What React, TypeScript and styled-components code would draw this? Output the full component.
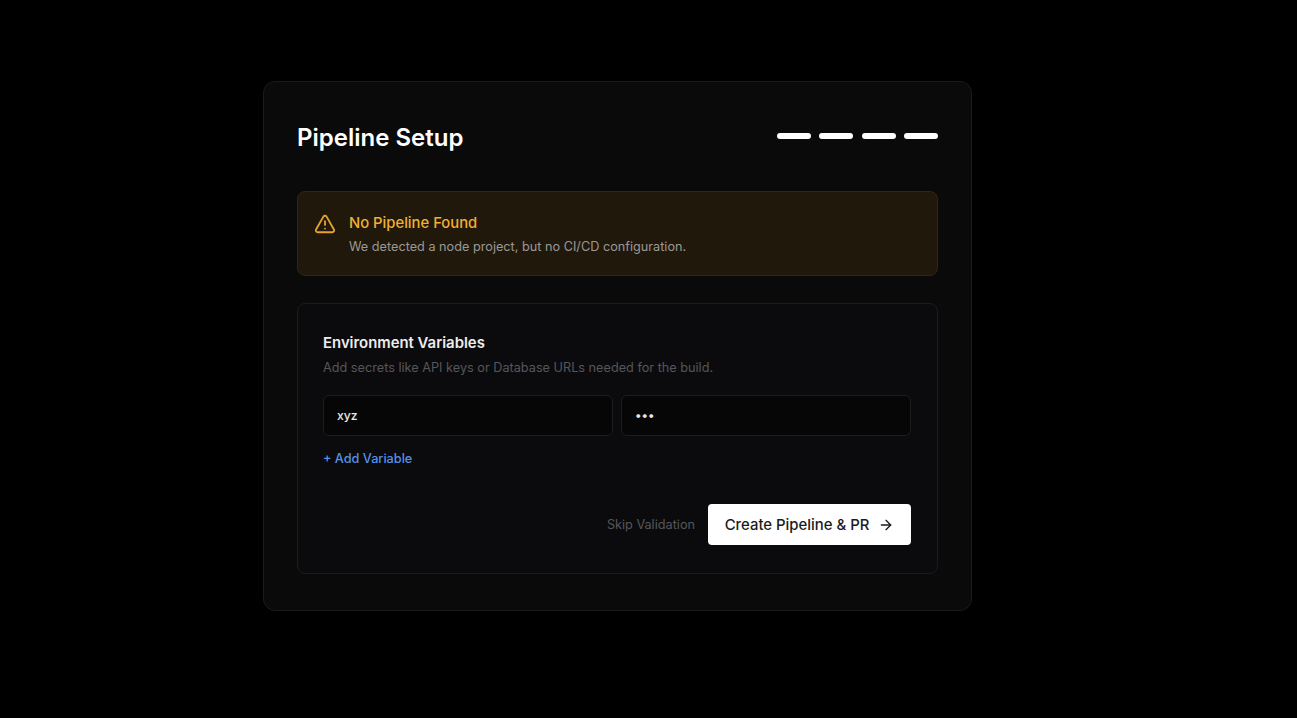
import styled, { createGlobalStyle } from "styled-components";
import { AlertTriangle, ArrowRight } from "lucide-react";

const GlobalStyle = createGlobalStyle`
  html, body {
    margin: 0;
    padding: 0;
    background: #000;
  }
  body {
    font-family: Inter, "Liberation Sans", sans-serif;
    -webkit-font-smoothing: antialiased;
  }
`;

const Page = styled.div`
  box-sizing: border-box;
  width: 100%;
  height: 718px;
  padding: 81px 0 0 263px;
  background: #000;
  overflow: hidden;
`;

const Card = styled.div`
  box-sizing: border-box;
  width: 709px;
  height: 530px;
  padding: 34px 33px 37px 33px;
  background: #0a0a0b;
  border: 1px solid #1b1b1d;
  border-radius: 12px;
`;

const Header = styled.div`
  display: flex;
  align-items: center;
  justify-content: space-between;
  height: 44px;
  margin-bottom: 31px;
`;

const Title = styled.h1`
  margin: 0;
  font-size: 24px;
  line-height: 44px;
  font-weight: 600;
  color: #fff;
`;

const Steps = styled.div`
  display: flex;
  gap: 8.3px;
  margin-top: -4px;
`;

const Step = styled.span`
  width: 34px;
  height: 6px;
  border-radius: 3px;
  background: #fff;
`;

const Alert = styled.div`
  box-sizing: border-box;
  display: flex;
  align-items: flex-start;
  gap: 13px;
  height: 85px;
  padding: 21px 16px 0;
  margin-bottom: 27px;
  background: #21180c;
  border: 1px solid #33270f;
  border-radius: 8px;
`;

const AlertIcon = styled(AlertTriangle)`
  flex: none;
  width: 22px;
  height: 22px;
  color: #e5a429;
`;

const AlertBody = styled.div`
  display: flex;
  flex-direction: column;
  gap: 6px;
`;

const AlertTitle = styled.div`
  font-size: 14.8px;
  line-height: 20px;
  font-weight: 500;
  color: #f0b032;
`;

const AlertText = styled.div`
  font-size: 12.7px;
  line-height: 16px;
  color: #9a9896;
`;

const Panel = styled.div`
  box-sizing: border-box;
  height: 271px;
  padding: 29px 26px 27px 25px;
  background: #0b0b0d;
  border: 1px solid #1c1c1f;
  border-radius: 8px;
`;

const PanelTitle = styled.h2`
  margin: 0 0 7px;
  font-size: 14.9px;
  line-height: 20px;
  font-weight: 600;
  color: #ededed;
`;

const PanelText = styled.p`
  margin: 0 0 19px;
  font-size: 12.7px;
  line-height: 16px;
  color: #56565a;
`;

const Fields = styled.div`
  display: grid;
  grid-template-columns: 290px 290px;
  gap: 8px;
  margin-bottom: 13px;
`;

const Field = styled.input`
  box-sizing: border-box;
  width: 100%;
  height: 41px;
  padding: 0 13px;
  background: #060607;
  border: 1px solid #1c1c1f;
  border-radius: 6px;
  outline: none;
  font-family: inherit;
  font-size: 12.2px;
  font-weight: 500;
  color: #e8e8e8;
`;

const AddLink = styled.button`
  display: block;
  padding: 0;
  height: 20px;
  background: none;
  border: 0;
  font-family: inherit;
  font-size: 12.7px;
  line-height: 20px;
  font-weight: 500;
  color: #5492ea;
`;

const Actions = styled.div`
  display: flex;
  align-items: center;
  justify-content: flex-end;
  gap: 13px;
  margin-top: 35px;
`;

const SkipButton = styled.button`
  padding: 0;
  background: none;
  border: 0;
  font-family: inherit;
  font-size: 12.7px;
  color: #56565a;
`;

const PrimaryButton = styled.button`
  box-sizing: border-box;
  display: flex;
  align-items: center;
  justify-content: center;
  gap: 9px;
  width: 203px;
  height: 41px;
  background: #fff;
  border: 0;
  border-radius: 4px;
  font-family: inherit;
  font-size: 14.9px;
  font-weight: 500;
  color: #1b1b1d;
`;

const ArrowIcon = styled(ArrowRight)`
  width: 16px;
  height: 16px;
`;

const App = () => {
  return (
    <Page>
      <GlobalStyle />
      <Card>
        <Header>
          <Title>Pipeline Setup</Title>
          <Steps>
            <Step />
            <Step />
            <Step />
            <Step />
          </Steps>
        </Header>
        <Alert>
          <AlertIcon strokeWidth={2} />
          <AlertBody>
            <AlertTitle>No Pipeline Found</AlertTitle>
            <AlertText>We detected a node project, but no CI/CD configuration.</AlertText>
          </AlertBody>
        </Alert>
        <Panel>
          <PanelTitle>Environment Variables</PanelTitle>
          <PanelText>Add secrets like API keys or Database URLs needed for the build.</PanelText>
          <Fields>
            <Field type="text" defaultValue="xyz" />
            <Field type="password" defaultValue="abc" />
          </Fields>
          <AddLink>+ Add Variable</AddLink>
          <Actions>
            <SkipButton>Skip Validation</SkipButton>
            <PrimaryButton>
              Create Pipeline &amp; PR
              <ArrowIcon strokeWidth={2} />
            </PrimaryButton>
          </Actions>
        </Panel>
      </Card>
    </Page>
  );
};

export default App;
